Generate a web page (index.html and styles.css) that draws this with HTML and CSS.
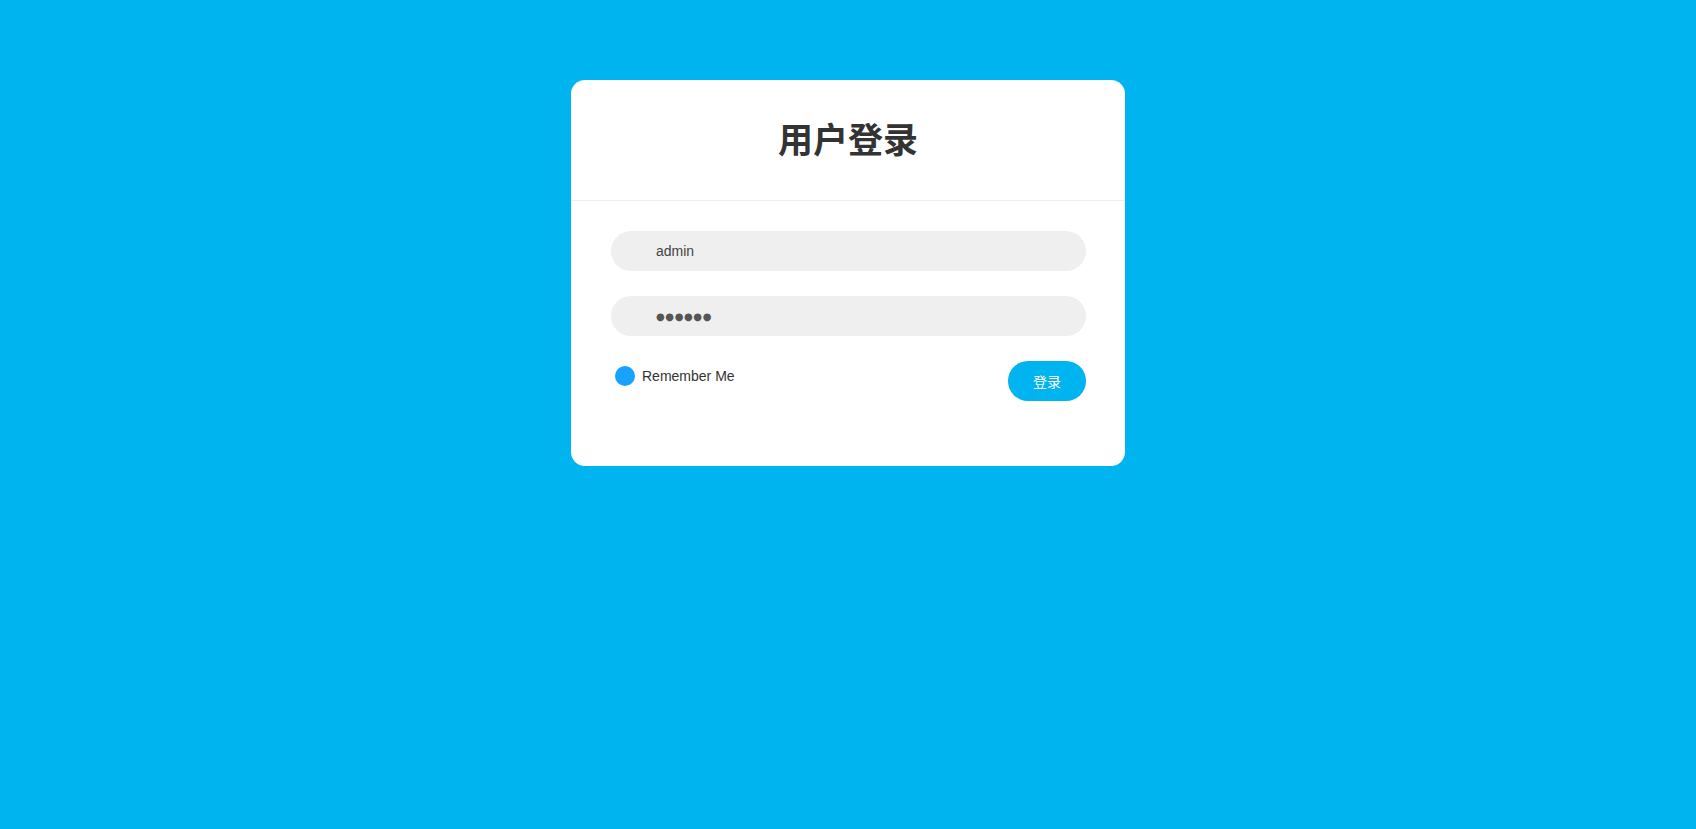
FILE: index.html
```html
<!DOCTYPE html>
<html lang="zh">
<head>
<meta charset="utf-8">
<title>用户登录</title>
<link rel="stylesheet" href="styles.css">
</head>
<body>
<div class="page">
  <div class="card">
    <div class="card-header">
      <h1 class="title">用户登录</h1>
    </div>
    <form class="card-body">
      <input class="field" type="text" value="admin">
      <input class="field field-secret" type="text" value="●●●●●●" readonly>
      <div class="actions">
        <label class="remember">
          <span class="dot"></span>
          <span class="remember-text">Remember Me</span>
        </label>
        <button class="btn" type="button">登录</button>
      </div>
    </form>
  </div>
</div>
</body>
</html>
```
FILE: styles.css
```css
html, body {
  margin: 0;
  padding: 0;
  height: 100%;
}
body {
  background: #00b4ef;
  font-family: "Liberation Sans", Arial, "Noto Sans CJK SC", sans-serif;
  color: #333;
}
.page {
  display: flex;
  justify-content: center;
  padding-top: 80px;
}
.card {
  width: 554px;
  height: 386px;
  background: #fff;
  border-radius: 14px;
  box-sizing: border-box;
}
.card-header {
  height: 120px;
  border-bottom: 1px solid #eeeeee;
  display: flex;
  align-items: center;
  justify-content: center;
}
.title {
  margin: 0;
  font-family: "Noto Sans CJK SC", sans-serif;
  font-size: 35px;
  font-weight: 700;
  color: #333;
  letter-spacing: 0;
  line-height: 1;
  padding-bottom: 6px;
}
.card-body {
  padding: 30px 39px 0 40px;
  display: flex;
  flex-direction: column;
  margin: 0;
}
.field {
  height: 40px;
  border: none;
  outline: none;
  border-radius: 20px;
  background: #efefef;
  padding: 0 0 0 45px;
  margin: 0 0 25px 0;
  font-family: "Liberation Sans", Arial, sans-serif;
  font-size: 14px;
  color: #444;
  box-sizing: border-box;
  width: 100%;
}
.field-secret {
  font-family: "DejaVu Sans", sans-serif;
  font-size: 10px;
  color: #555;
  letter-spacing: 0.6px;
}
.actions {
  display: flex;
  justify-content: space-between;
  align-items: flex-start;
}
.remember {
  display: flex;
  align-items: center;
  gap: 7px;
  margin-top: 5px;
  padding-left: 4px;
  font-size: 14px;
  color: #333;
}
.dot {
  width: 20px;
  height: 20px;
  border-radius: 50%;
  background: #17a2fb;
  display: block;
}
.btn {
  width: 78px;
  height: 40px;
  border: none;
  border-radius: 20px;
  background: #00b4ef;
  color: #fff;
  font-family: "Noto Sans CJK SC", sans-serif;
  font-size: 14px;
  padding: 0;
  cursor: pointer;
}
```
